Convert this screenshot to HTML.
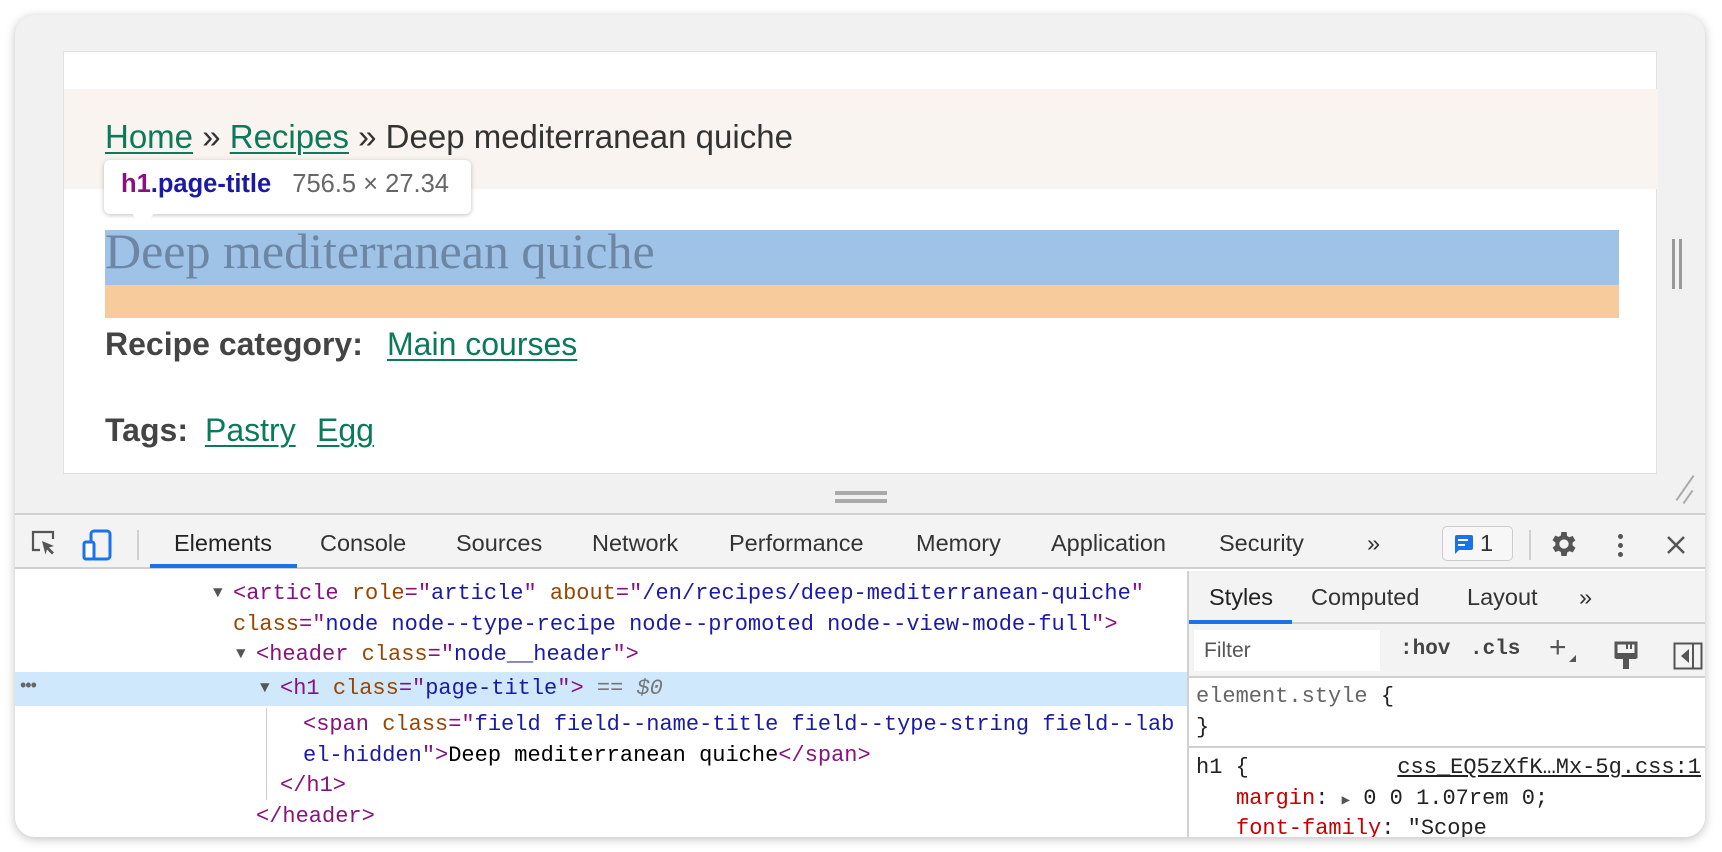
<!DOCTYPE html>
<html><head><meta charset="utf-8"><style>
*{margin:0;padding:0;box-sizing:border-box}
body{width:1722px;height:852px;background:#fff;position:relative;overflow:hidden;font-family:"Liberation Sans",sans-serif}
.win{position:absolute;left:15px;top:15px;width:1690px;height:822px;background:#f1f1f1;border-radius:20px;box-shadow:0 2px 10px rgba(0,0,0,.25);overflow:hidden}
.a{position:absolute;white-space:nowrap}
.vp{position:absolute;left:48px;top:36px;width:1594px;height:423px;background:#fff;border:1px solid #e2e2e2}
a,.lk{color:#0b7a5a;text-decoration:underline;text-decoration-thickness:2px;text-underline-offset:4px}
.mono{font-family:"Liberation Mono",monospace;font-size:22px}
.tg{color:#881280}.an{color:#994500}.av{color:#1a1aa6}
.tab{position:absolute;top:15px;font-size:23.5px;color:#333}
</style></head><body>
<div class="win">
 <div class="vp">
  <div class="a" style="left:0;top:37px;width:1594px;height:100px;background:#f9f4ef"></div>
  <div class="a" style="left:41px;top:66px;font-size:33px;color:#333"><span class="lk">Home</span> » <span class="lk">Recipes</span> » Deep mediterranean quiche</div>
  <div class="a" style="left:41px;top:178px;width:1514px;height:55px;background:#9fc3e7"></div>
  <div class="a" style="left:41px;top:233px;width:1514px;height:33px;background:#f7cb9b"></div>
  <div class="a" style="left:41px;top:170px;font-family:'Liberation Serif',serif;font-size:50px;color:#6d86a3">Deep mediterranean quiche</div>
  <div class="a" style="left:40px;top:108px;width:367px;height:54px;background:#fff;border-radius:6px;box-shadow:0 1px 5px rgba(0,0,0,.25)"></div>
  <div class="a" style="left:68px;top:161px;width:0;height:0;border-left:11px solid transparent;border-right:11px solid transparent;border-top:17px solid #fff"></div>
  <div class="a" style="left:57px;top:118px;font-size:25.5px;font-weight:bold;color:#1a1aa6"><span style="color:#881280">h1</span>.page-title <span style="font-weight:normal;color:#666;margin-left:14px">756.5 × 27.34</span></div>
  <div class="a" style="left:41px;top:274px;font-size:32px;font-weight:bold;color:#444">Recipe category:</div>
  <div class="a lk" style="left:323px;top:274px;font-size:32px">Main courses</div>
  <div class="a" style="left:41px;top:360px;font-size:32px;font-weight:bold;color:#444">Tags:</div>
  <div class="a lk" style="left:141px;top:360px;font-size:32px">Pastry</div>
  <div class="a lk" style="left:253px;top:360px;font-size:32px">Egg</div>
 </div>
 <div class="a" style="left:1657px;top:224px;width:3px;height:50px;background:#999"></div>
 <div class="a" style="left:1664px;top:224px;width:3px;height:50px;background:#999"></div>
 <div class="a" style="left:820px;top:476px;width:52px;height:4px;background:#aaa"></div>
 <div class="a" style="left:820px;top:484px;width:52px;height:4px;background:#aaa"></div>
 <div class="a" style="left:1655px;top:472px;width:30px;height:2px;background:#aaa;transform:rotate(-55deg)"></div>
 <div class="a" style="left:1665px;top:481px;width:16px;height:2px;background:#aaa;transform:rotate(-55deg)"></div>
 <!-- devtools -->
 <div class="a" style="left:0;top:498px;width:1690px;height:324px;background:#fff;border-top:2px solid #d0d0d0"></div>
 <div class="a" style="left:0;top:500px;width:1690px;height:54px;background:#f3f3f3;border-bottom:2px solid #d0d0d0">
  <svg class="a" style="left:16px;top:14px" width="26" height="28" viewBox="0 0 26 28"><path d="M9 21H2V3h20v7" fill="none" stroke="#555" stroke-width="2.2"/><path d="M11 12l12 5-5 1.5 5 5-2 2-5-5-1.5 5z" fill="#555"/></svg>
  <svg class="a" style="left:67px;top:14px" width="30" height="32" viewBox="0 0 30 32"><rect x="9" y="2" width="19" height="28" rx="3" fill="none" stroke="#1a73e8" stroke-width="3"/><rect x="2" y="13" width="10" height="17" rx="2" fill="#fff" stroke="#1a73e8" stroke-width="3"/></svg>
  <div class="a" style="left:122px;top:15px;width:2px;height:30px;background:#d0d0d0"></div>
  <div class="tab" style="left:159px;color:#222">Elements</div>
  <div class="a" style="left:135px;top:49px;width:147px;height:4px;background:#1a73e8"></div>
  <div class="tab" style="left:305px">Console</div>
  <div class="tab" style="left:441px">Sources</div>
  <div class="tab" style="left:577px">Network</div>
  <div class="tab" style="left:714px">Performance</div>
  <div class="tab" style="left:901px">Memory</div>
  <div class="tab" style="left:1036px">Application</div>
  <div class="tab" style="left:1204px">Security</div>
  <div class="tab" style="left:1352px">»</div>
  <div class="a" style="left:1427px;top:11px;width:71px;height:35px;border:1.5px solid #ccc;border-radius:5px;background:#f7f7f7"></div>
  <svg class="a" style="left:1437px;top:19px" width="22" height="22" viewBox="0 0 22 22"><path d="M3 1h16a2 2 0 0 1 2 2v11a2 2 0 0 1-2 2H7l-4 4V3a2 2 0 0 1 2-2z" fill="#1a73e8"/><rect x="6" y="5" width="10" height="2" fill="#fff"/><rect x="6" y="10" width="7" height="2" fill="#fff"/></svg>
  <div class="tab" style="left:1465px;top:15px">1</div>
  <div class="a" style="left:1514px;top:15px;width:2px;height:30px;background:#d0d0d0"></div>
  <svg class="a" style="left:1533px;top:13px" width="32" height="32" viewBox="0 0 24 24"><path fill="#555" d="M19.4 13a7.5 7.5 0 0 0 0-2l2.1-1.6-2-3.5-2.5 1a7 7 0 0 0-1.7-1L15 3h-4l-.4 2.7a7 7 0 0 0-1.7 1l-2.5-1-2 3.5L6.6 11a7.5 7.5 0 0 0 0 2l-2.1 1.6 2 3.5 2.5-1a7 7 0 0 0 1.7 1L11 21h4l.4-2.7a7 7 0 0 0 1.7-1l2.5 1 2-3.5zM13 15.5a3.5 3.5 0 1 1 0-7 3.5 3.5 0 0 1 0 7z" transform="translate(-1 0)"/></svg>
  <div class="a" style="left:1603px;top:19px;width:5px;height:5px;border-radius:50%;background:#555;box-shadow:0 9px 0 #555,0 18px 0 #555"></div>
  <svg class="a" style="left:1650px;top:19px" width="22" height="22" viewBox="0 0 22 22"><path d="M3 3l16 16M19 3L3 19" stroke="#555" stroke-width="2.5"/></svg>
 </div>
 <!-- DOM -->
 <div class="a" style="left:0;top:657px;width:1172px;height:34px;background:#cfe8fc"></div>
 <div class="a" style="left:5px;top:660px;font-size:18px;color:#666;letter-spacing:-1px">•••</div>
 <div class="a" style="left:251px;top:693px;width:1px;height:92px;background:#ccc"></div>
 <div class="mono">
  <div class="a" style="left:198px;top:569px;color:#555;font-size:16px">▼</div>
  <div class="a" style="left:218px;top:566px"><span class="tg">&lt;article</span> <span class="an">role</span><span class="tg">="</span><span class="av">article</span><span class="tg">"</span> <span class="an">about</span><span class="tg">="</span><span class="av">/en/recipes/deep-mediterranean-quiche</span><span class="tg">"</span></div>
  <div class="a" style="left:218px;top:597px"><span class="an">class</span><span class="tg">="</span><span class="av">node node--type-recipe node--promoted node--view-mode-full</span><span class="tg">"&gt;</span></div>
  <div class="a" style="left:221px;top:630px;color:#555;font-size:16px">▼</div>
  <div class="a" style="left:241px;top:627px"><span class="tg">&lt;header</span> <span class="an">class</span><span class="tg">="</span><span class="av">node__header</span><span class="tg">"&gt;</span></div>
  <div class="a" style="left:245px;top:664px;color:#555;font-size:16px">▼</div>
  <div class="a" style="left:265px;top:661px"><span class="tg">&lt;h1</span> <span class="an">class</span><span class="tg">="</span><span class="av">page-title</span><span class="tg">"&gt;</span> <span style="color:#777">== <i>$0</i></span></div>
  <div class="a" style="left:288px;top:697px"><span class="tg">&lt;span</span> <span class="an">class</span><span class="tg">="</span><span class="av">field field--name-title field--type-string field--lab</span></div>
  <div class="a" style="left:288px;top:728px"><span class="av">el-hidden</span><span class="tg">"&gt;</span>Deep mediterranean quiche<span class="tg">&lt;/span&gt;</span></div>
  <div class="a" style="left:265px;top:758px"><span class="tg">&lt;/h1&gt;</span></div>
  <div class="a" style="left:241px;top:789px"><span class="tg">&lt;/header&gt;</span></div>
 </div>
 <!-- styles pane -->
 <div class="a" style="left:1172px;top:556px;width:518px;height:266px;background:#fff;border-left:2px solid #d0d0d0">
  <div class="a" style="left:0;top:0;width:518px;height:53px;background:#f3f3f3;border-bottom:2px solid #d0d0d0"></div>
  <div class="tab" style="left:20px;top:13px;color:#222">Styles</div>
  <div class="tab" style="left:122px;top:13px">Computed</div>
  <div class="tab" style="left:278px;top:13px">Layout</div>
  <div class="tab" style="left:390px;top:13px">»</div>
  <div class="a" style="left:0;top:49px;width:103px;height:4px;background:#1a73e8"></div>
  <div class="a" style="left:0;top:53px;width:518px;height:54px;background:#f3f3f3;border-bottom:2px solid #d0d0d0"></div>
  <div class="a" style="left:5px;top:59px;width:186px;height:41px;background:#fff"></div>
  <div class="a" style="left:15px;top:68px;font-size:21px;color:#555">Filter</div>
  <div class="a mono" style="left:211px;top:67px;font-size:21px;font-weight:bold;color:#444">:hov</div>
  <div class="a mono" style="left:281px;top:67px;font-size:21px;font-weight:bold;color:#444">.cls</div>
  <div class="a" style="left:360px;top:60px;font-size:30px;color:#555">+</div>
  <div class="a" style="left:380px;top:84px;width:0;height:0;border-left:7px solid transparent;border-bottom:7px solid #555"></div>
  <svg class="a" style="left:425px;top:70px" width="24" height="30" viewBox="0 0 24 30"><path d="M2 2h20v14H2z" fill="none" stroke="#555" stroke-width="3"/><path d="M2 12h20v6H2zM9 18h6v10H9z" fill="#555"/><path d="M13 2v6M17 2v6" stroke="#555" stroke-width="2"/></svg>
  <svg class="a" style="left:484px;top:71px" width="30" height="28" viewBox="0 0 30 28"><rect x="1.5" y="1.5" width="27" height="25" fill="none" stroke="#555" stroke-width="2"/><path d="M20 2v24" stroke="#555" stroke-width="2"/><path d="M16 7v14l-8-7z" fill="#555"/></svg>
  <div class="mono a" style="left:7px;top:113px;color:#666">element.style <span style="color:#222">{</span></div>
  <div class="mono a" style="left:7px;top:144px;color:#222">}</div>
  <div class="a" style="left:0;top:175px;width:518px;height:2px;background:#d0d0d0"></div>
  <div class="mono a" style="left:7px;top:184px;color:#222">h1 {</div>
  <div class="mono a" style="right:4px;top:184px;color:#222;text-decoration:underline">css_EQ5zXfK…Mx-5g.css:1</div>
  <div class="mono a" style="left:47px;top:215px;color:#222"><span style="color:#c80000">margin</span>: <span style="font-size:14px;color:#555">▶</span> 0 0 1.07rem 0;</div>
  <div class="mono a" style="left:47px;top:245px;color:#222"><span style="color:#c80000">font-family</span>: "Scope</div>
 </div>
</div>
</body></html>
